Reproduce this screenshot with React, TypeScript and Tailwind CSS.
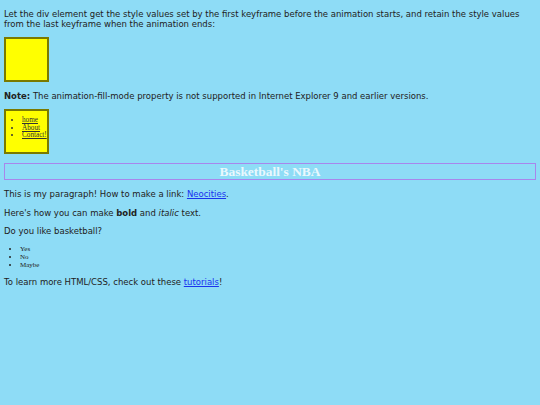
const serif = "font-['Liberation_Serif','Times_New_Roman',serif]";

const NavBox = () => (
  <div className="my-[8.5px] h-[45px] w-[45px] border-2 border-[#7a7a00] bg-[#ffff00]">
    <ul className={`${serif} mt-[6px] list-disc pl-[16px] text-[7.2px] leading-[7.5px] text-[#333]`}>
      <li><a href="#" className="underline">home</a></li>
      <li><a href="#" className="underline">About</a></li>
      <li><a href="#" className="underline">Contact!</a></li>
    </ul>
  </div>
);

export default function App() {
  return (
    <div className="flow-root min-h-screen bg-[#8edcf6] px-[4px] font-['DejaVu_Sans',Verdana,sans-serif] text-[8.5px] leading-[10px] text-[#222]">
      <p className="my-[8.5px]">
        Let the div element get the style values set by the first keyframe before the animation starts, and retain the style values from the last keyframe when the animation ends:
      </p>

      <div className="my-[8.5px] h-[45px] w-[45px] border-2 border-[#7a7a00] bg-[#ffff00]" />

      <p className="my-[8.5px]">
        <b>Note:</b> The animation-fill-mode property is not supported in Internet Explorer 9 and earlier versions.
      </p>

      <NavBox />

      <h1 className={`${serif} mt-[8.5px] mb-[9.5px] border-[1.5px] border-[#a886ec] text-center text-[13.4px] font-bold leading-[15px] text-[#eaf8fd]`}>
        Basketball's NBA
      </h1>

      <p className="my-[8.5px]">
        This is my paragraph! How to make a link: <a href="#" className="text-[#1a33ee] underline">Neocities</a>.
      </p>
      <p className="my-[8.5px]">
        Here's how you can make <b>bold</b> and <i>italic</i> text.
      </p>
      <p className="my-[8.5px]">Do you like basketball?</p>

      <ul className={`${serif} my-[6px] list-disc pl-[16px] text-[7px] leading-[8px]`}>
        <li>Yes</li>
        <li>No</li>
        <li>Maybe</li>
      </ul>

      <p className="my-[8.5px]">
        To learn more HTML/CSS, check out these <a href="#" className="text-[#1a33ee] underline">tutorials</a>!
      </p>
    </div>
  );
}
